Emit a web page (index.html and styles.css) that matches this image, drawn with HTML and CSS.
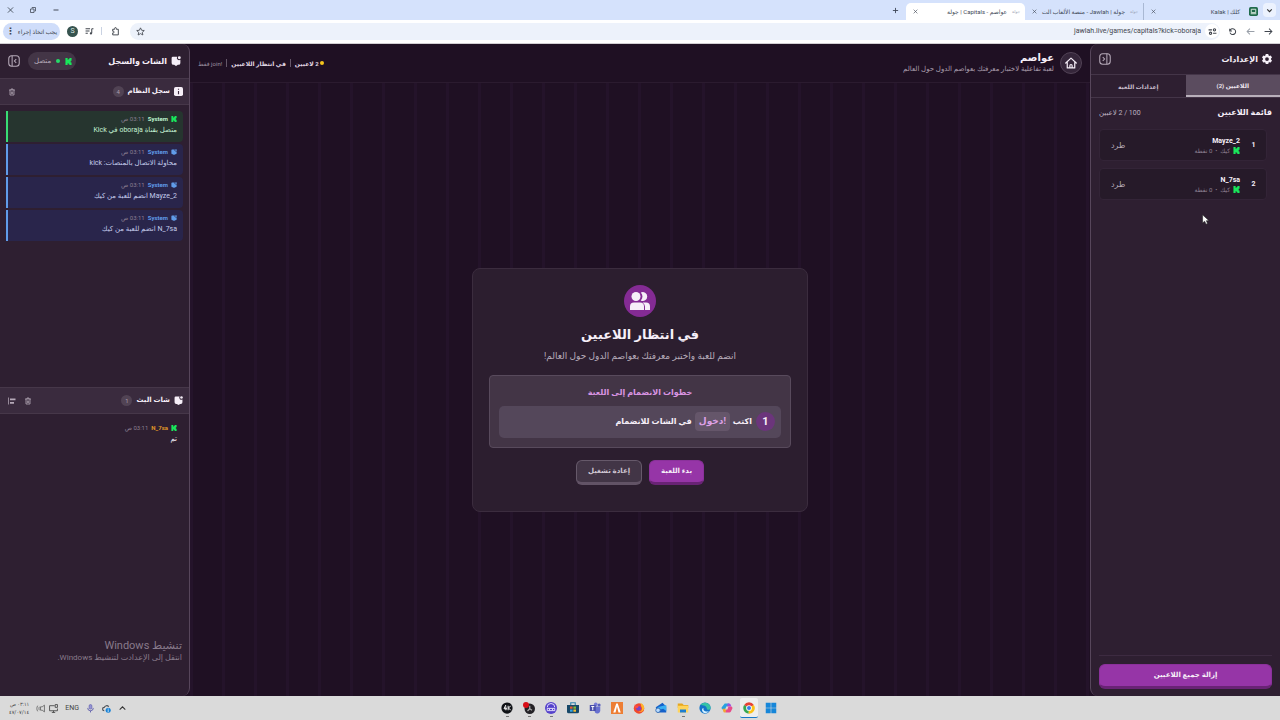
FILE: index.html
```html
<!DOCTYPE html>
<html lang="ar" dir="rtl">
<head>
  <meta charset="UTF-8">
  <title>عواصم - Capitals | جولة</title>
  <meta name="viewport" content="width=device-width, initial-scale=1">
  <link rel="stylesheet" href="styles.css">
</head>
<body>
  <svg class="sprite" aria-hidden="true">
    <symbol id="kick" viewBox="0 0 16 16"><path fill="#19e65b" d="M1 0h5v4h2V2h2V0h5v6h-2v4h2v6h-5v-2H8v-2H6v4H1z"/></symbol>
    <symbol id="chat" viewBox="0 0 16 16"><path fill="currentColor" d="M3 1h7a3.600 3.600 0 0 0 5 5v5a3 3 0 0 1-3 3h-1l-3 2-3-2H4a3 3 0 0 1-3-3V3a2 2 0 0 1 2-2z"/><circle cx="13.300" cy="2.700" r="2.300" fill="currentColor"/></symbol>
    <symbol id="trash" viewBox="0 0 16 16"><path fill="none" stroke="currentColor" stroke-width="1.6" d="M2 4h12M6 4V2h4v2M4 4v10h8V4M6.700 7v5M9.300 7v5"/></symbol>
    <symbol id="close" viewBox="0 0 16 16"><path fill="none" stroke="currentColor" stroke-width="2" d="M2 2l12 12M14 2L2 14"/></symbol>
    <symbol id="arrow" viewBox="0 0 16 16"><path fill="none" stroke="currentColor" stroke-width="1.8" d="M1 8h13M9 3l5 5-5 5"/></symbol>
  </svg>

  <div class="browser-tabs">
    <button class="tab-search" aria-label="بحث"><svg viewBox="0 0 16 16"><path d="M4 6l4 4 4-4" fill="none" stroke="#333" stroke-width="2"/></svg></button>
    <div class="browser-tab">
      <svg class="favicon" viewBox="0 0 16 16"><rect width="16" height="16" rx="3" fill="#1f6b4c"/><path d="M4 4h8v6H4zM3 12h10" fill="none" stroke="#e4efe8" stroke-width="1.6"/></svg>
      <span>كلك | Kalak</span>
      <button class="tab-close" aria-label="إغلاق"><svg><use href="#close"/></svg></button>
    </div>
    <div class="browser-tab divided">
      <span class="tiny-icon">جولة</span>
      <span>جولة | Jawlah - منصة الألعاب الت</span>
      <button class="tab-close" aria-label="إغلاق"><svg><use href="#close"/></svg></button>
    </div>
    <div class="browser-tab active">
      <span class="tiny-icon">جولة</span>
      <span>عواصم - Capitals | جولة</span>
      <button class="tab-close" aria-label="إغلاق"><svg><use href="#close"/></svg></button>
    </div>
    <button class="new-tab" aria-label="علامة تبويب جديدة"><svg viewBox="0 0 16 16"><path d="M8 2v12M2 8h12" stroke="#3c4454" stroke-width="2"/></svg></button>
    <div class="window-buttons">
      <svg viewBox="0 0 16 16"><path d="M3 8h10" stroke="#444b58" stroke-width="2"/></svg>
      <svg viewBox="0 0 16 16"><path d="M3 6h7v7H3zM6 5V3h7v7h-2" fill="none" stroke="#444b58" stroke-width="1.6"/></svg>
      <svg><use href="#close"/></svg>
    </div>
  </div>

  <div class="browser-bar">
    <button class="nav-btn" aria-label="رجوع"><svg><use href="#arrow"/></svg></button>
    <button class="nav-btn flipped" aria-label="تقدم"><svg><use href="#arrow"/></svg></button>
    <button class="nav-btn" aria-label="تحديث"><svg viewBox="0 0 16 16"><path d="M3 3v4h4M3.500 6.500A5.200 5.200 0 1 1 3.500 10" fill="none" stroke="currentColor" stroke-width="1.8"/></svg></button>
    <div class="address">
      <span class="site-info"><svg viewBox="0 0 16 16"><path d="M1 5h6M9 11h6" stroke="currentColor" stroke-width="2"/><circle cx="11.500" cy="5" r="2" fill="none" stroke="currentColor" stroke-width="2"/><circle cx="4.500" cy="11" r="2" fill="none" stroke="currentColor" stroke-width="2"/></svg></span>
      <input type="text" dir="ltr" aria-label="العنوان" value="jawlah.live/games/capitals?kick=oboraja">
      <svg viewBox="0 0 16 16"><path d="M8 1.500l2 4.300 4.700.5-3.500 3.200 1 4.700L8 11.800l-4.200 2.400 1-4.700L1.300 6.300 6 5.800z" fill="none" stroke="currentColor" stroke-width="1.500"/></svg>
    </div>
    <svg class="ext" viewBox="0 0 16 16"><path d="M3 4h3.500V2.500a1.500 1.500 0 0 1 3 0V4H13v10H3v-3.500h1a1.500 1.500 0 0 0 0-3H3z" fill="none" stroke="currentColor" stroke-width="1.700"/></svg>
    <span class="bar-line"></span>
    <svg class="media" viewBox="0 0 16 16"><path d="M1 3h8M1 7h7M1 11h4M12 3v8M12 3h3" stroke="currentColor" stroke-width="1.800"/><circle cx="10.500" cy="11.500" r="2" fill="currentColor"/></svg>
    <span class="avatar">S</span>
    <button class="action-needed">يجب اتخاذ إجراء <b>⋮</b></button>
  </div>

  <div class="app">
    <aside class="panel settings">
      <header class="panel-header">
        <h2><svg viewBox="0 0 16 16"><path fill="currentColor" fill-rule="evenodd" d="M6 0h4l.6 2.300 1.200.7L14 2.300l2 3.400L14.400 7.300v1.400L16 10.300l-2 3.400-2.200-.7-1.200.7L10 16H6l-.6-2.300-1.200-.7-2.200.7-2-3.400 1.600-1.600V7.300L0 5.700l2-3.400 2.200.7 1.200-.7zM8 5a3 3 0 1 0 0 6 3 3 0 0 0 0-6z"/></svg>الإعدادات</h2>
        <button class="collapse" aria-label="طي"><svg viewBox="0 0 16 16"><rect x="1" y="1" width="14" height="14" rx="4" fill="none" stroke="currentColor" stroke-width="1.400"/><path d="M10.500 1v14M5 5.500L7.500 8 5 10.500" fill="none" stroke="currentColor" stroke-width="1.400"/></svg></button>
      </header>
      <nav class="panel-tabs">
        <button class="active">اللاعبين (2)</button>
        <button>إعدادات اللعبة</button>
      </nav>
      <div class="players">
        <div class="players-title"><h3>قائمة اللاعبين</h3><span>100 / 2 لاعبين</span></div>
        <div class="player">
          <b class="rank">1</b>
          <div class="player-info"><b>Mayze_2</b><span><svg><use href="#kick"/></svg>كيك <i>•</i> 0 نقطة</span></div>
          <button>طرد</button>
        </div>
        <div class="player">
          <b class="rank">2</b>
          <div class="player-info"><b>N_7sa</b><span><svg><use href="#kick"/></svg>كيك <i>•</i> 0 نقطة</span></div>
          <button>طرد</button>
        </div>
      </div>
      <footer class="panel-footer"><button class="btn primary">إزالة جميع اللاعبين</button></footer>
    </aside>

    <main class="game">
      <header class="game-header">
        <a class="home" href="#" aria-label="الرئيسية"><svg viewBox="0 0 16 16"><path d="M1 8l7-6.500L15 8M3 7v7.500h10V7M6.500 14v-2.500a1.500 1.500 0 0 1 3 0V14" fill="none" stroke="currentColor" stroke-width="1.600" stroke-linejoin="round" stroke-linecap="round"/></svg></a>
        <div class="game-title">
          <h1>عواصم</h1>
          <p>لعبة تفاعلية لاختبار معرفتك بعواصم الدول حول العالم</p>
        </div>
        <div class="status">
          <span class="dot"></span><b>2 لاعبين</b><i></i><b>في انتظار اللاعبين</b><i></i><span>!join فقط</span>
        </div>
      </header>
      <div class="board">
        <section class="waiting">
          <div class="waiting-icon"><svg viewBox="0 0 20 18"><path fill="currentColor" d="M10.800.6A4.400 4.400 0 1 1 10.800 8.400 6 6 0 0 0 10.800.6zM12.500 10.500H16a4 4 0 0 1 4 4V18h-5v-3.500a5 5 0 0 0-2.500-4z"/><circle cx="6" cy="4.500" r="4.500" fill="currentColor"/><path fill="currentColor" d="M4 10.500h6a4 4 0 0 1 4 4V18H0v-3.500a4 4 0 0 1 4-4z"/></svg></div>
          <h2>في انتظار اللاعبين</h2>
          <p>انضم للعبة واختبر معرفتك بعواصم الدول حول العالم!</p>
          <div class="steps">
            <h3>خطوات الانضمام إلى اللعبة</h3>
            <div class="step"><span class="step-num">1</span><span>اكتب</span><code>!دخول</code><span>في الشات للانضمام</span></div>
          </div>
          <div class="actions">
            <button class="btn primary">بدء اللعبة</button>
            <button class="btn secondary">إعادة تشغيل</button>
          </div>
        </section>
      </div>
    </main>

    <aside class="panel chat">
      <header class="panel-header">
        <h2><svg><use href="#chat"/></svg>الشات والسجل</h2>
        <div class="header-tools">
          <span class="connected"><svg><use href="#kick"/></svg><i></i>متصل</span>
          <button class="collapse" aria-label="طي"><svg viewBox="0 0 16 16"><rect x="1" y="1" width="14" height="14" rx="4" fill="none" stroke="currentColor" stroke-width="1.400"/><path d="M5.500 1v14M11 5.500L8.500 8l2.500 2.500" fill="none" stroke="currentColor" stroke-width="1.400"/></svg></button>
        </div>
      </header>
      <section class="log">
        <div class="section-header">
          <svg class="info" viewBox="0 0 16 16"><rect width="16" height="16" rx="3" fill="currentColor"/><path d="M8 3v2M8 7v6" stroke="#3b2b3f" stroke-width="2"/></svg>
          <h3>سجل النظام</h3><span class="count">4</span>
          <button aria-label="مسح"><svg><use href="#trash"/></svg></button>
        </div>
        <div class="entries">
          <div class="entry success"><div class="meta"><svg><use href="#kick"/></svg><b>System</b><time>03:11 ص</time></div><p>متصل بقناة oboraja في Kick</p></div>
          <div class="entry"><div class="meta"><svg><use href="#chat"/></svg><b>System</b><time>03:11 ص</time></div><p>محاولة الاتصال بالمنصات: kick</p></div>
          <div class="entry"><div class="meta"><svg><use href="#chat"/></svg><b>System</b><time>03:11 ص</time></div><p>Mayze_2 انضم للعبة من كيك</p></div>
          <div class="entry"><div class="meta"><svg><use href="#chat"/></svg><b>System</b><time>03:11 ص</time></div><p>N_7sa انضم للعبة من كيك</p></div>
        </div>
      </section>
      <section class="stream">
        <div class="section-header">
          <svg><use href="#chat"/></svg>
          <h3>شات البث</h3><span class="count">1</span>
          <button aria-label="مسح"><svg><use href="#trash"/></svg></button>
          <button aria-label="محاذاة"><svg viewBox="0 0 16 16"><path d="M1 1v14" stroke="currentColor" stroke-width="1.500"/><path d="M4 4.500h11M4 11.500h8" stroke="currentColor" stroke-width="3.500"/></svg></button>
        </div>
        <div class="message"><div class="meta"><svg><use href="#kick"/></svg><b>N_7sa</b><time>03:11 ص</time></div><p>تم</p></div>
      </section>
      <div class="watermark"><p>تنشيط Windows</p><span>انتقل إلى الإعدادت لتنشيط Windows.</span></div>
    </aside>
  </div>

  <div class="taskbar">
    <div class="apps">
      <span><svg viewBox="0 0 16 16"><path fill="#1686d9" d="M1 1h6.600v6.600H1zM8.400 1H15v6.600H8.400zM1 8.400h6.600V15H1zM8.400 8.400H15V15H8.400z"/></svg></span>
      <span class="current"><svg viewBox="0 0 16 16"><path fill="#e64235" d="M8 8L1.500 4A7.500 7.500 0 0 1 14.500 4z"/><path fill="#36a852" d="M8 8l-.5 7.500A7.500 7.500 0 0 1 1.500 4z"/><path fill="#fbc116" d="M8 8l6.500-4A7.500 7.500 0 0 1 7.500 15.500z"/><circle cx="8" cy="8" r="3.800" fill="#fff"/><circle cx="8" cy="8" r="2.700" fill="#3b7ee8"/></svg></span>
      <span><svg viewBox="0 0 16 16"><path fill="#27a2df" d="M5 2h6l-3 8H3a2 2 0 0 1-2-3z"/><path fill="#a04ee0" d="M9 2h2a2 2 0 0 1 2 2l1 2H8z"/><path fill="#f2a632" d="M2 9h6l-2 5H5a2 2 0 0 1-2-2z"/><path fill="#e94a87" d="M8 6h5a2 2 0 0 1 2 3l-2 4a2 2 0 0 1-2 1H6z"/><path fill="#dadada" d="M7 6h3l-1.500 4h-3z"/></svg></span>
      <span><svg viewBox="0 0 16 16"><circle cx="8" cy="8" r="7.500" fill="#1474c9"/><path fill="#35c3a5" d="M2 4a7.500 7.500 0 0 1 13.500 4c0 3-5 3-5 1 0-4-5-5-8.500-5z"/><path d="M6 8c-1 4 3 6 7 4-2 4-8 4-9-1 0-2 1-3 2-3z" fill="#d2efff"/></svg></span>
      <span class="running"><svg viewBox="0 0 16 16"><path fill="#e6a61f" d="M1 2h6l2 2h6v4H1z"/><path fill="#ffd45b" d="M1 5h14v9H1z"/><path fill="#1d7ed0" d="M4 10h8v4H4z"/></svg></span>
      <span><svg viewBox="0 0 16 16"><path fill="#1661c9" d="M1 7l9-6 5 5v8H3z"/><path fill="#3aaff2" d="M3 7l12-3v8l-4-3-4 1z"/><circle cx="4" cy="11" r="3" fill="#b9dcff" stroke="#225ca7"/></svg></span>
      <span><svg viewBox="0 0 16 16"><circle cx="8" cy="8.500" r="7" fill="#f1482b"/><path fill="#ffb42c" d="M10 1c4 2 6 6 4.500 9S10 14 7 13c5 0 6-4 4-7z"/><circle cx="7.500" cy="8.500" r="3.200" fill="#7941c7"/><path fill="#f94a48" d="M2 3l2 2h4l-2 3H3z"/></svg></span>
      <span><svg viewBox="0 0 16 16"><rect width="16" height="16" fill="#ed7e34"/><path d="M3 14L7 2h2l4 12h-3L8 6l-2 8z" fill="#fff"/></svg></span>
      <span><svg viewBox="0 0 16 16"><circle cx="9" cy="3" r="2.500" fill="#777bd7"/><circle cx="13.500" cy="4" r="2" fill="#5961bd"/><path fill="#6770d0" d="M6 6h9v6a4 4 0 0 1-7 2z"/><path fill="#484eaa" d="M1 4h8v8H1z"/><path d="M3 6h4M5 6v5" stroke="#fff" stroke-width="1.300"/></svg></span>
      <span><svg viewBox="0 0 16 16"><path d="M5 4V1h6v3" fill="none" stroke="#3285b0" stroke-width="1.500"/><path fill="#174868" d="M0 4h16v9a2 2 0 0 1-2 2H2a2 2 0 0 1-2-2z"/><path fill="#e35b35" d="M4 6h3.500v3H4z"/><path fill="#82bb35" d="M8.500 6H12v3H8.500z"/><path fill="#36a5e5" d="M4 10h3.500v3H4z"/><path fill="#f5bd35" d="M8.500 10H12v3H8.500z"/></svg></span>
      <span class="running"><svg viewBox="0 0 16 16"><circle cx="8" cy="8" r="8" fill="#5542cb"/><path d="M3 7a5 5 0 0 1 10 0M3 8.500h10v3H3zM6 9v2M10 9v2" fill="none" stroke="#eeeaff" stroke-width="1.200"/></svg></span>
      <span class="running"><svg class="obs" viewBox="0 0 16 16"><circle cx="9" cy="9" r="7" fill="#242226"/><path d="M9 9V5M9 9l3 2M9 9l-3 3" stroke="#aaa" stroke-width="1.600"/><circle cx="4" cy="4" r="4" fill="#d80e17"/></svg></span>
      <span class="running"><svg viewBox="0 0 16 16"><circle cx="8" cy="8" r="7.500" fill="#101216"/><path d="M6.500 4L4 9h4M6.500 6v5M9.500 5v6M13 5l-3 3 3 3" fill="none" stroke="#fff" stroke-width="1.300"/></svg></span>
    </div>
    <div class="tray">
      <svg viewBox="0 0 16 16"><path d="M3 10l5-5 5 5" fill="none" stroke="#333" stroke-width="1.800"/></svg>
      <svg viewBox="0 0 16 16"><path d="M4 12a3 3 0 0 1 0-6 4.500 4.500 0 0 1 8-1" fill="none" stroke="#4b5057" stroke-width="2"/><circle cx="11" cy="11" r="4.500" fill="#1681d6"/><path d="M11 8v2M11 11v3" stroke="#fff" stroke-width="1.500"/></svg>
      <svg viewBox="0 0 16 16"><rect x="5.500" y="1" width="5" height="8" rx="2.500" fill="#9694d6" stroke="#5755a8"/><path d="M3 7a5 5 0 0 0 10 0M8 12v3" fill="none" stroke="#5755a8" stroke-width="1.500"/></svg>
      <span class="lang">ENG</span>
      <span class="volume">
        <svg viewBox="0 0 16 16"><path d="M10 3H1v9h14V8M5 15h6M8 12v3M11 1h4v5h-4z" fill="none" stroke="#444" stroke-width="1.500"/></svg>
        <svg viewBox="0 0 16 16"><path d="M15 2v12l-4-3H8V5h3zM6 5c-1 2-1 4 0 6M3 3c-2 3-2 7 0 10" fill="none" stroke="#555" stroke-width="1.300"/></svg>
      </span>
      <div class="clock"><span>٠٣:١١ ص</span><span>٤٧/٠٧/١٤</span></div>
    </div>
  </div>
  <svg class="cursor" viewBox="0 0 12 18"><path d="M1 1v14l3.500-3L7 17l2.500-1L7.500 11H12z" fill="#fff" stroke="#222"/></svg>
</body>
</html>
```
FILE: styles.css
```css
* {
  box-sizing: border-box;
}
body {
  margin: 0;
  height: 100vh;
  display: flex;
  flex-direction: column;
  overflow: hidden;
  background: #1f1023;
  color: #f6eff8;
  font-family: Roboto, "DejaVu Sans", sans-serif;
  font-size: 7px;
  line-height: 11px;
}
h1, h2, h3, p {
  margin: 0;
}
button, input {
  font: inherit;
  color: inherit;
  border: none;
  background: none;
  padding: 0;
}
button {
  display: flex;
  align-items: center;
  justify-content: center;
  white-space: nowrap;
  cursor: pointer;
}
svg {
  width: 9px;
  height: 9px;
  flex: none;
}
.sprite {
  position: absolute;
  width: 0;
  height: 0;
}

/* browser */
.browser-tabs {
  flex: none;
  height: 20px;
  display: flex;
  align-items: center;
  background: #d5e2fc;
  color: #424957;
  padding: 0 4px;
}
.tab-search {
  width: 13px;
  height: 14px;
  border-radius: 4px;
  background: #ecf2fe;
}
.browser-tab {
  width: 119px;
  height: 17px;
  margin-top: 3px;
  padding: 0 5px 0 7px;
  display: flex;
  align-items: center;
  gap: 5px;
  white-space: nowrap;
  font-size: 6px;
}
.browser-tab .tiny-icon {
  font-size: 4px;
  color: #98a1b1;
}
.browser-tab .favicon {
  margin-left: 4px;
}
.browser-tab.divided {
  border-right: 1px solid #a9b8d3;
}
.browser-tab.active {
  background: #fff;
  border-radius: 5px 5px 0 0;
}
.tab-close {
  margin-right: auto;
}
.tab-close svg {
  width: 5px;
  height: 5px;
}
.new-tab {
  margin-right: 7px;
}
.new-tab svg {
  width: 7px;
  height: 7px;
}
.window-buttons {
  display: flex;
  gap: 15px;
  margin-right: auto;
  padding-left: 3px;
}
.window-buttons svg {
  width: 8px;
  height: 8px;
  color: #444b58;
}
.window-buttons svg:last-child {
  width: 7px;
}
.browser-bar {
  flex: none;
  height: 24px;
  display: flex;
  align-items: center;
  gap: 7px;
  padding: 0 6px 1px 3px;
  background: #fff;
  border-bottom: 1px solid #d2cfd3;
  color: #41464e;
}
.nav-btn {
  width: 11px;
}
.nav-btn.flipped {
  transform: scaleX(-1);
  color: #999fa8;
}
.address {
  flex: 1;
  height: 17px;
  display: flex;
  align-items: center;
  gap: 4px;
  padding: 0 1px 0 6px;
  border-radius: 9px;
  background: #edf2fb;
}
.address input {
  flex: 1;
  text-align: right;
  font-size: 7px;
  outline: none;
}
.site-info {
  width: 14px;
  height: 14px;
  border-radius: 7px;
  background: #fff;
  display: flex;
  align-items: center;
  justify-content: center;
}
.ext {
  margin: 0 3px 0 2px;
}
.bar-line {
  width: 1px;
  height: 8px;
  background: #c9d2e2;
}
.avatar {
  width: 11px;
  height: 11px;
  border-radius: 50%;
  background: #36534f;
  color: #dce8e5;
  text-align: center;
}
.action-needed {
  width: 57px;
  height: 17px;
  gap: 3px;
  border-radius: 9px;
  background: #cfddfa;
  font-size: 6px;
}
.action-needed b {
  font-size: 9px;
}

/* side panels */
.app {
  flex: 1;
  min-height: 0;
  display: flex;
}
.panel {
  flex: none;
  width: 190px;
  display: flex;
  flex-direction: column;
  background: #2e1f31;
  border: 0 solid #57465b;
}
.settings {
  border-left-width: 1px;
  border-radius: 8px 0 0 8px;
}
.chat {
  position: relative;
  border-right-width: 1px;
  border-radius: 0 8px 8px 0;
}
.panel-header {
  height: 30px;
  display: flex;
  align-items: center;
  justify-content: space-between;
  padding: 0 8px;
}
.chat .panel-header {
  height: 34px;
}
.panel-header h2 {
  display: flex;
  align-items: center;
  gap: 4px;
  font-size: 8px;
}
.panel-header h2 svg {
  width: 10px;
  height: 10px;
}
.collapse {
  color: #b5a9b8;
}
.collapse svg {
  width: 12px;
  height: 12px;
}
.panel-tabs {
  display: flex;
  height: 24px;
  border: 1px solid #443548;
  border-width: 1px 0;
}
.panel-tabs button {
  flex: 1;
  color: #c8bdcb;
  font-weight: bold;
  font-size: 6px;
}
.panel-tabs .active {
  background: #5b4c5f;
  border-bottom: 2px solid #b9b0bb;
  color: #eee6f0;
}
.players {
  flex: 1;
  padding: 8px 13px 0 8px;
}
.players-title {
  display: flex;
  justify-content: space-between;
  align-items: center;
  margin: 0 -5px 9px 0;
  color: #bdb2c0;
}
.players-title h3 {
  font-size: 8px;
  line-height: 14px;
  color: #f6eff8;
}
.player {
  height: 32px;
  margin-bottom: 7px;
  display: flex;
  align-items: center;
  padding: 0 7px 0 11px;
  background: #261a29;
  border: 1px solid #332437;
  border-radius: 4px;
}
.rank {
  width: 11px;
  text-align: center;
}
.player-info {
  margin-right: 8px;
  display: flex;
  flex-direction: column;
}
.player-info b {
  font-size: 7px;
  line-height: 10px;
}
.player-info span {
  display: flex;
  align-items: center;
  gap: 3px;
  font-size: 6px;
  line-height: 9px;
  color: #8f8193;
}
.player-info svg {
  width: 7px;
  height: 7px;
}
.player button {
  margin-right: auto;
  color: #b5a9b8;
  font-size: 8px;
}
.panel-footer {
  margin: 0 8px;
  padding: 8px 0 7px;
  border-top: 1px solid #3d2b41;
}
.panel-footer .btn {
  width: 100%;
}
.btn {
  height: 25px;
  padding: 0 11px;
  border-radius: 6px;
  font-weight: bold;
}
.btn.primary {
  background: #9635a7;
  border: 1px solid #8b319b;
  border-bottom: 3px solid #692375;
}
.btn.secondary {
  background: #423546;
  border: 1px solid #66596a;
  border-bottom: 3px solid #625366;
  color: #d0c7d3;
}

/* game */
.game {
  flex: 1;
  min-width: 0;
  display: flex;
  flex-direction: column;
}
.game-header {
  height: 39px;
  display: flex;
  align-items: center;
  gap: 6px;
  padding: 0 8px;
  border-bottom: 1px solid #2b1b2f;
}
.home {
  width: 22px;
  height: 22px;
  display: flex;
  align-items: center;
  justify-content: center;
  border-radius: 50%;
  border: 1px solid #514255;
  background: #35263a;
  color: #f6eff8;
}
.home svg {
  width: 12px;
  height: 12px;
}
.game-title h1 {
  font-size: 10px;
  line-height: 13px;
}
.game-title p {
  color: #a99dac;
}
.status {
  margin-right: auto;
  display: flex;
  align-items: center;
  gap: 4px;
  font-size: 6px;
  color: #9d90a1;
}
.status b {
  color: #e1d8e4;
}
.status i {
  width: 1px;
  height: 8px;
  background: #655769;
}
.dot {
  width: 4px;
  height: 4px;
  margin-left: -3px;
  border-radius: 50%;
  background: #f5c51c;
}
.board {
  flex: 1;
  display: flex;
  align-items: center;
  justify-content: center;
  background: repeating-linear-gradient(to right, #24132a 0 3px, #1f1023 3px 32px);
}
.waiting {
  width: 336px;
  padding: 16px 16px 26px;
  display: flex;
  flex-direction: column;
  align-items: center;
  border: 1px solid #3b2c3e;
  border-radius: 8px;
  background: #2c1e2f;
}
.waiting-icon {
  width: 32px;
  height: 32px;
  display: flex;
  align-items: center;
  justify-content: center;
  border-radius: 50%;
  background: #842b94;
}
.waiting-icon svg {
  width: 20px;
  height: 18px;
}
.waiting h2 {
  margin-top: 8px;
  font-size: 13px;
  line-height: 20px;
}
.waiting p {
  margin: 3px 0 11px;
  font-size: 9px;
  line-height: 16px;
  color: #b6abb9;
}
.steps {
  width: 100%;
  padding: 9px;
  border: 1px solid #584a5c;
  border-radius: 4px;
  background: #433546;
}
.steps h3 {
  margin-bottom: 6px;
  font-size: 8px;
  line-height: 15px;
  text-align: center;
  color: #d994e2;
}
.step {
  height: 32px;
  display: flex;
  align-items: center;
  gap: 3px;
  padding: 0 6px;
  border-radius: 5px;
  background: #54475a;
  font-size: 8px;
  font-weight: bold;
}
.step-num {
  width: 19px;
  height: 19px;
  margin-left: 1px;
  border-radius: 50%;
  background: #6b357b;
  font-size: 11px;
  line-height: 19px;
  text-align: center;
}
.step code {
  padding: 0 4px;
  border-radius: 4px;
  background: #65566a;
  color: #dea1e7;
  font-family: inherit;
  font-size: 9px;
  line-height: 19px;
}
.actions {
  display: flex;
  gap: 7px;
  margin-top: 12px;
}

/* chat and log */
.header-tools {
  display: flex;
  align-items: center;
  gap: 8px;
}
.connected {
  display: flex;
  align-items: center;
  gap: 5px;
  height: 18px;
  padding: 0 4px 0 6px;
  border-radius: 9px;
  background: #433546;
  color: #b6abb9;
}
.connected svg {
  width: 7px;
  height: 7px;
}
.connected i {
  width: 4px;
  height: 4px;
  border-radius: 50%;
  background: #25dc69;
}
.section-header {
  height: 27px;
  display: flex;
  align-items: center;
  gap: 4px;
  padding: 0 6px 0 8px;
  background: #3a2b3e;
  border: 1px solid #463749;
  border-width: 1px 0;
}
.section-header h3 {
  font-size: 7px;
}
.count {
  width: 11px;
  height: 11px;
  margin-left: auto;
  border-radius: 50%;
  background: #514354;
  color: #a99dac;
  font-size: 6px;
  text-align: center;
}
.section-header button {
  margin-right: 4px;
  color: #b5a9b8;
}
.section-header button svg {
  width: 8px;
  height: 8px;
}
.log {
  flex: 1;
}
.stream {
  flex: 1;
}
.entries {
  padding: 6px 6px 5px;
}
.entry {
  height: 31px;
  margin-bottom: 2px;
  padding: 2px 6px;
  background: #29254b;
  border-left: 2px solid #609ce9;
  border-radius: 0 4px 4px 0;
}
.entry.success {
  background: #26352f;
  border-left-color: #39dc75;
}
.entry p {
  color: #c4ccec;
}
.entry.success p {
  color: #c5f2d4;
}
.meta {
  display: flex;
  align-items: center;
  gap: 3px;
  line-height: 12px;
  color: #609ce9;
}
.meta svg {
  width: 6px;
  height: 6px;
}
.meta b {
  font-size: 6px;
}
.meta time {
  font-size: 6px;
  color: #8b7f91;
}
.success .meta b {
  color: #bef6d1;
}
.message {
  padding: 8px 12px;
}
.message b {
  color: #e19928;
}
.watermark {
  position: absolute;
  right: 7px;
  bottom: 32px;
  color: #887a8b;
}
.watermark p {
  font-size: 11px;
  line-height: 13px;
}
.watermark span {
  white-space: nowrap;
  font-size: 8px;
}

/* taskbar */
.taskbar {
  flex: none;
  position: relative;
  height: 24px;
  display: flex;
  align-items: center;
  justify-content: center;
  background: #dadada;
  color: #444;
}
.apps {
  display: flex;
  gap: 4px;
  padding-right: 2px;
}
.apps span {
  width: 18px;
  height: 20px;
  display: flex;
  align-items: center;
  justify-content: center;
  border-bottom: 1px solid transparent;
}
.apps svg {
  width: 12px;
  height: 12px;
}
.apps .current {
  background: #eee;
  border-radius: 2px;
  border-bottom-color: #1678c8;
}
.apps .running {
  background: linear-gradient(#777, #777) center bottom / 3px 1px no-repeat;
}
.tray {
  position: absolute;
  left: 9px;
  display: flex;
  align-items: center;
  gap: 7px;
}
.volume {
  display: flex;
  gap: 4px;
}
.clock {
  display: flex;
  flex-direction: column;
  font-size: 5px;
  line-height: 8px;
}
.cursor {
  position: absolute;
  left: 1202px;
  top: 214px;
  width: 7px;
  height: 11px;
}
```
